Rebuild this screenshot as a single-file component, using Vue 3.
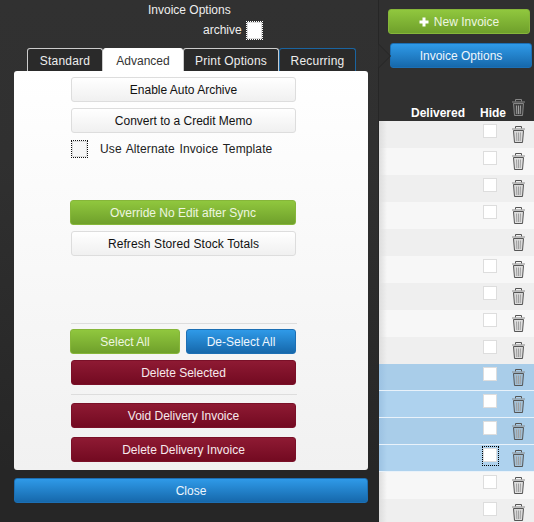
<script setup>
const rows = Array.from({ length: 15 }, (_, i) => ({
  id: i,
  blue: i >= 9 && i <= 12,
  alt: i % 2 === 1,
  check: i !== 4,
  focus: i === 12,
}))
const tabs = [
  { label: 'Standard', cls: 'w1' },
  { label: 'Advanced', cls: 'w2 active' },
  { label: 'Print Options', cls: 'w3' },
  { label: 'Recurring', cls: 'w4' },
]
</script>

<template>
  <div class="page">
    <section class="modal">
      <div class="title">Invoice Options</div>
      <div class="archive"><span>archive</span><i class="box focus"></i></div>
      <div class="tabs">
        <div v-for="t in tabs" :key="t.label" class="tab" :class="t.cls">{{ t.label }}</div>
      </div>
      <div class="panel">
        <button class="btn plain">Enable Auto Archive</button>
        <button class="btn plain mt6">Convert to a Credit Memo</button>
        <div class="alt-row">
          <i class="box focus small"></i>
          <span>Use Alternate Invoice Template</span>
        </div>
        <button class="btn green sync">Override No Edit after Sync</button>
        <button class="btn plain mt6 refresh">Refresh Stored Stock Totals</button>
        <hr class="rule first" />
        <div class="pair">
          <button class="btn green half">Select All</button>
          <button class="btn blue half">De-Select All</button>
        </div>
        <button class="btn red mt6">Delete Selected</button>
        <hr class="rule second" />
        <button class="btn red">Void Delivery Invoice</button>
        <button class="btn red mt9">Delete Delivery Invoice</button>
      </div>
      <button class="btn blue close">Close</button>
    </section>

    <section class="side">
      <button class="btn green new">
        <svg class="plus" viewBox="0 0 10 10"><path d="M5 .5v9M.5 5h9" stroke="#fff" stroke-width="3" /></svg>New Invoice
      </button>
      <div class="opt-wrap">
        <svg class="notch" viewBox="0 0 13 24"><path d="M.5 0l12 12-12 12" fill="#2f2f2f" stroke="#262626" /></svg>
        <button class="btn blue opt">Invoice Options</button>
      </div>
      <div class="thead">
        <span class="th-del">Delivered</span>
        <span class="th-hide">Hide</span>
        <svg class="trash head" viewBox="0 0 13 17"><use href="#trash-shape" /></svg>
      </div>
      <svg class="defs" width="0" height="0">
        <symbol id="trash-shape" viewBox="0 0 13 17">
          <path d="M3.5 2.5V.5h6v2" fill="none" stroke="currentColor" />
          <path d="M0 3h13" stroke="#8a8a8a" />
          <path d="M1.5 4.5l1 12h8l1-12z" fill="#808080" fill-opacity=".2" stroke="currentColor" />
          <path d="M4.5 6.5l.3 8.5M6.5 6.5V15M8.5 6.5L8.2 15" stroke="#a0a0a0" fill="none" />
        </symbol>
      </svg>
      <div v-for="r in rows" :key="r.id" class="row" :class="{ alt: r.alt, sel: r.blue }">
        <i v-if="r.check" class="cell-box" :class="{ focus: r.focus }"></i>
        <svg class="trash" viewBox="0 0 13 17"><use href="#trash-shape" /></svg>
      </div>
    </section>
  </div>
</template>

<style>
html, body { margin: 0; background: #303030; }
</style>

<style scoped>
.page {
  width: 534px;
  height: 522px;
  display: flex;
  overflow: hidden;
  background: #303030;
  font-family: "Liberation Sans", Arial, sans-serif;
  font-size: 12px;
}
.modal {
  width: 379px;
  height: 522px;
  flex: none;
  box-sizing: border-box;
  padding: 3px 0 0 14px;
  background: linear-gradient(#313131, #303030 30%, #262626 90%);
  border-right: 1px solid #262626;
  color: #eee;
}
.title { height: 15px; line-height: 15px; padding-left: 134px; }
.archive {
  display: flex;
  align-items: center;
  height: 20px;
  margin-top: 2px;
  padding-left: 189px;
  gap: 5px;
}
.box {
  display: block;
  width: 13px;
  height: 15px;
  background: #fff;
  border: 1px solid #ddd;
}
.box.focus { outline: 1px dotted #fff; outline-offset: 0; }
.box.small { height: 14px; margin-left: 1px; background: #f6f6f6; outline-color: #111; }
.tabs { display: flex; padding-left: 13px; margin-top: 8px; height: 23px; }
.tab {
  box-sizing: border-box;
  height: 23px;
  text-align: center;
  line-height: 25px;
  letter-spacing: .2px;
  background: #2a2a2a;
  border: 1px solid #ccc;
  border-bottom: 0;
  border-radius: 3px 3px 0 0;
  color: #eee;
}
.w1 { width: 76px; }
.w2 { width: 80px; letter-spacing: 0; }
.w3 { width: 96px; }
.w4 { width: 77px; border-color: #1a64a0; }
.tab.active { background: #fff; color: #333; border-color: #fff; }
.panel {
  width: 354px;
  height: 399px;
  box-sizing: border-box;
  padding: 6px 0 0 57px;
  display: flex;
  flex-direction: column;
  align-items: flex-start;
  background: linear-gradient(#fff, #f1f1f1);
  border-radius: 3px;
  color: #222;
}
.btn {
  display: block;
  box-sizing: border-box;
  width: 225px;
  height: 25px;
  padding: 0;
  flex: none;
  border-radius: 3px;
  font: inherit;
  text-align: center;
  cursor: pointer;
}
.plain {
  background: linear-gradient(#fff, #f0f0f0);
  border: 1px solid #ddd;
  color: #111;
}
.refresh { letter-spacing: .1px; }
.green {
  background: linear-gradient(#90c73e, #6fa02b);
  border: 1px solid #86b63a;
  color: #eef6e0;
}
.blue {
  background: linear-gradient(#2f9ae8, #1668ab);
  border: 1px solid #1c6fb4;
  color: #eef6fd;
}
.red {
  background: linear-gradient(#8e1a33, #730a21);
  border: 1px solid #7a1028;
  color: #f7e9ec;
}
.mt6 { margin-top: 6px; }
.mt9 { margin-top: 9px; }
.alt-row {
  width: 225px;
  height: 20px;
  margin-top: 6px;
  display: flex;
  align-items: center;
  gap: 13px;
  color: #222;
}
.alt-row span { word-spacing: 1.2px; letter-spacing: .12px; }
.sync { margin-top: 41px; width: 226px; margin-left: -1px; }
.rule {
  width: 226px;
  height: 1px;
  margin: 0;
  border: 0;
  background: #ddd;
  flex: none;
}
.rule.first { margin-top: 67px; }
.rule.second { margin-top: 9px; margin-bottom: 8px; }
.pair {
  width: 226px;
  margin-top: 5px;
  margin-left: -1px;
  display: flex;
  justify-content: space-between;
}
.half { width: 110px; }
.close { width: 354px; margin-top: 8px; }
.side { flex: 1; min-width: 0; }
.new {
  width: 142px;
  margin: 9px 0 0 9px;
}
.plus { width: 10px; height: 10px; margin-right: 5px; vertical-align: -1px; }
.opt-wrap { position: relative; margin-top: 9px; padding-left: 11px; height: 25px; }
.opt { width: 142px; }
.notch {
  position: absolute;
  left: -1px;
  top: 1px;
  width: 13px;
  height: 24px;
}
.thead {
  position: relative;
  height: 53px;
  color: #fff;
  font-weight: bold;
}
.th-del { position: absolute; left: 32px; top: 38px; }
.th-hide { position: absolute; left: 101px; top: 38px; }
.trash { position: absolute; left: 133px; top: 5px; width: 13px; height: 17px; color: #555; }
.trash.head { top: 31px; color: #858585; }
.defs { position: absolute; }
.row {
  position: relative;
  height: 27px;
  box-sizing: border-box;
  background: linear-gradient(90deg, #ddd, #efefef 8px);
}
.row.alt { background: linear-gradient(90deg, #ddd, #f7f7f7 8px); }
.row.sel { background: linear-gradient(90deg, #9cc2e2, #aed2ee 8px); border-bottom: 1px solid #e9f2fa; }
.row.sel.alt { background: linear-gradient(90deg, #9cc2e2, #a9cde9 8px); }
.cell-box {
  position: absolute;
  left: 104px;
  top: 3px;
  box-sizing: border-box;
  width: 14px;
  height: 14px;
  background: #fff;
  border: 1px solid #ddd;
}
.cell-box.focus::after {
  content: "";
  position: absolute;
  left: -2px;
  top: -3px;
  right: -3px;
  bottom: -5px;
  border: 1px dotted #000;
}
</style>
